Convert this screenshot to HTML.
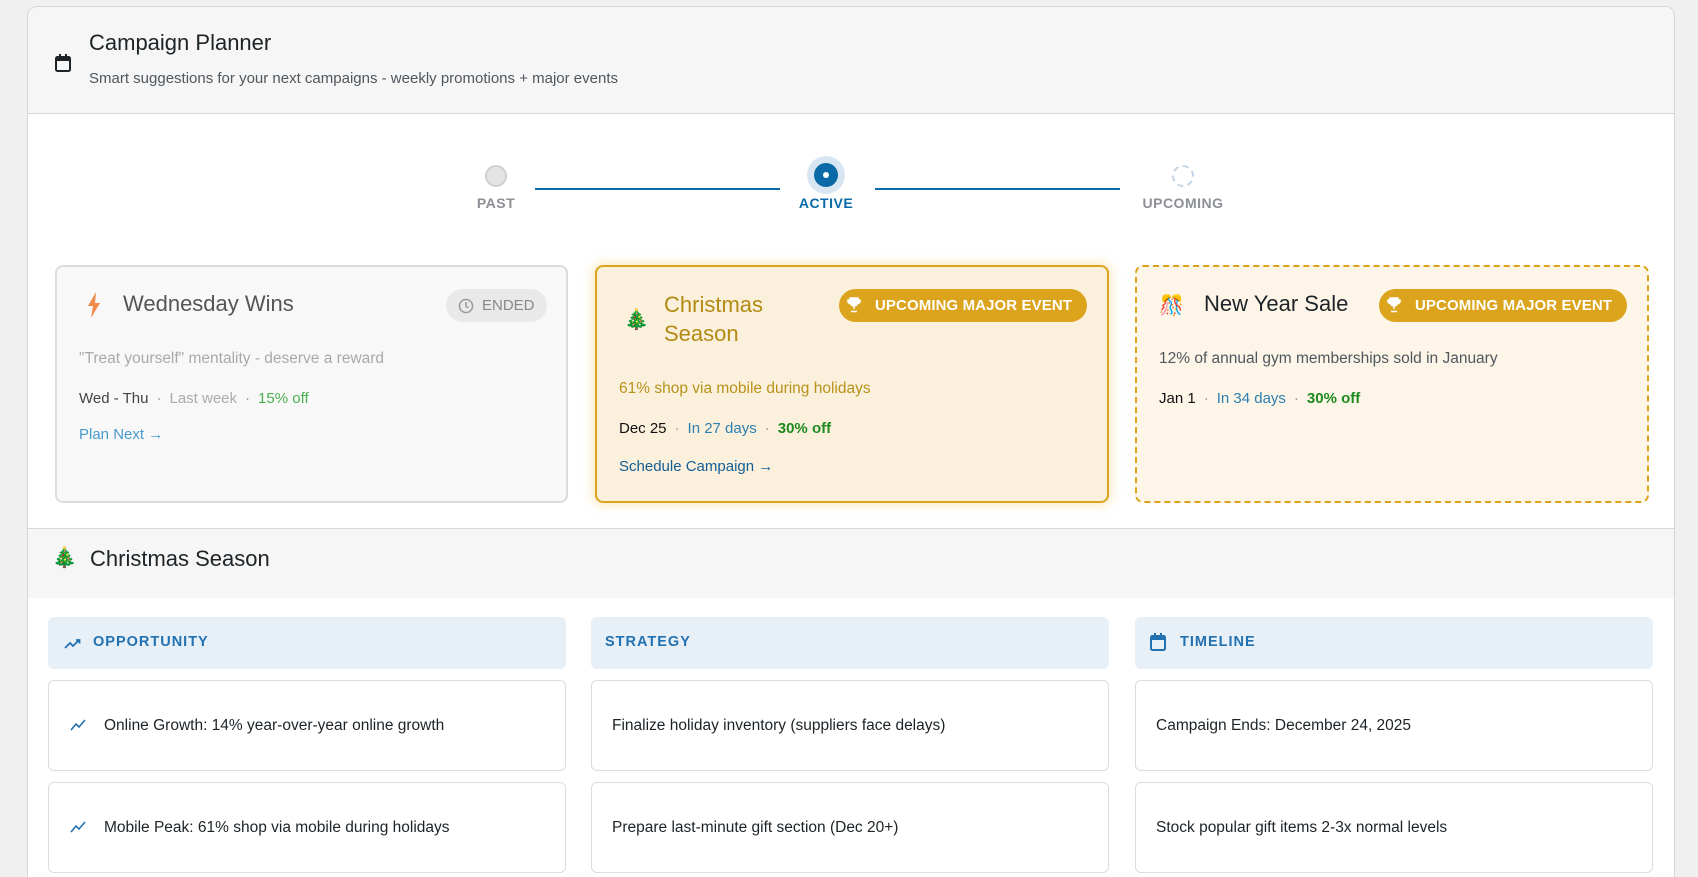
<!DOCTYPE html>
<html style="overflow:hidden;height:877px"><head><meta charset="utf-8"><style>
*{box-sizing:border-box;margin:0;padding:0}
body{width:1698px;height:877px;background:#f0f0f0;font-family:"Liberation Sans","Noto Sans CJK SC",sans-serif;overflow:hidden;position:relative;color:#1d2327}
.wrap{position:absolute;left:27px;top:6px;width:1648px;height:900px;background:#fff;border:1px solid #d5d5d5;border-radius:10px;overflow:hidden}
.hdr{position:absolute;left:0;top:0;width:100%;height:107px;background:#f5f6f5;border-bottom:1px solid #d5d8da}
.abs{position:absolute}
.card{position:absolute;height:238px;border-radius:8px}
.ttl{font-size:22px}
.badge{position:absolute;height:33px;border-radius:17px;background:#dba41c;color:#fff;font-weight:bold;font-size:15px;line-height:33px;padding-left:36px;letter-spacing:.1px}
.dot{color:#999;margin:0 8px}
.colh{position:absolute;top:610px;height:52px;width:518px;background:#e7eff7;border-radius:6px;color:#2271b1;font-weight:bold;font-size:14.5px;letter-spacing:1px;line-height:50px}
.row{position:absolute;width:518px;height:91px;border:1px solid #dcdcde;border-radius:6px;background:#fff;font-size:15.5px;line-height:89px;color:#1d2327}
</style></head><body>
<div class="wrap">
 <div class="hdr">
  <svg class="abs" style="left:26px;top:46px" width="18" height="20" viewBox="0 0 18 20"><rect x="2" y="4" width="14" height="14" rx="1.5" fill="none" stroke="#1d2327" stroke-width="2"/><rect x="2" y="4" width="14" height="4" fill="#1d2327"/><rect x="5" y="1" width="2" height="4" fill="#1d2327"/><rect x="11" y="1" width="2" height="4" fill="#1d2327"/></svg>
  <div class="abs" style="left:61px;top:23px;font-size:22px;font-weight:500">Campaign Planner</div>
  <div class="abs" style="left:61px;top:63px;font-size:15px;color:#50575e">Smart suggestions for your next campaigns - weekly promotions + major events</div>
 </div>
 <div class="abs" style="left:457px;top:158px;width:22px;height:22px;border-radius:50%;background:#e4e4e4;border:2px solid #d0d0d0"></div>
 <div class="abs" style="left:507px;top:181px;width:245px;height:2px;background:#0a6aa8"></div>
 <div class="abs" style="left:779px;top:149px;width:38px;height:38px;border-radius:50%;background:#d7e6f2"></div>
 <div class="abs" style="left:786px;top:156px;width:24px;height:24px;border-radius:50%;background:#0a6aa8"></div>
 <div class="abs" style="left:795px;top:165px;width:6px;height:6px;border-radius:50%;background:#fff"></div>
 <div class="abs" style="left:847px;top:181px;width:245px;height:2px;background:#0a6aa8"></div>
 <div class="abs" style="left:1144px;top:158px;width:22px;height:22px;border-radius:50%;border:2px dashed #c5d4e2"></div>
 <div class="abs" style="left:418px;top:188px;width:100px;text-align:center;font-size:14px;font-weight:bold;color:#8c8f94;letter-spacing:.5px">PAST</div>
 <div class="abs" style="left:748px;top:188px;width:100px;text-align:center;font-size:14px;font-weight:bold;color:#0a6aa8;letter-spacing:.5px">ACTIVE</div>
 <div class="abs" style="left:1085px;top:188px;width:140px;text-align:center;font-size:14px;font-weight:bold;color:#8c8f94;letter-spacing:.5px">UPCOMING</div>

 <div class="card" style="left:27px;top:258px;width:513px;background:#f8f8f8;border:2px solid #dcdcdc">
  <svg class="abs" style="left:30px;top:25px" width="14" height="26" viewBox="0 0 14 26"><path d="M9 0L1 14h5l-2 12 9-15H8z" fill="#f28a4a"/></svg>
  <div class="abs ttl" style="left:66px;top:24px;color:#555">Wednesday Wins</div>
  <div class="abs" style="left:389px;top:22px;width:101px;height:33px;border-radius:17px;background:#e9e9e9;color:#888;font-size:15px;line-height:33px;padding-left:36px">ENDED</div>
  <svg class="abs" style="left:401px;top:31px" width="16" height="16" viewBox="0 0 16 16"><circle cx="8" cy="8" r="6.5" fill="none" stroke="#999" stroke-width="1.5"/><path d="M8 4v4.5l2.5 1.5" fill="none" stroke="#999" stroke-width="1.5"/></svg>
  <div class="abs" style="left:22px;top:83px;font-size:15.5px;color:#a7aaad">"Treat yourself" mentality - deserve a reward</div>
  <div class="abs" style="left:22px;top:123px;font-size:15px;color:#444">Wed - Thu<span class="dot">·</span><span style="color:#aaa">Last week</span><span class="dot">·</span><span style="color:#4caf50">15% off</span></div>
  <div class="abs" style="left:22px;top:159px;font-size:15px;color:#4a9acb">Plan Next →</div>
 </div>

 <div class="card" style="left:567px;top:258px;width:514px;background:#faf0dc;border:2px solid #dba41c;box-shadow:0 0 10px 3px rgba(240,200,100,.35)">
  <div class="abs" style="left:27px;top:40px;font-size:20px">🎄</div>
  <div class="abs ttl" style="left:67px;top:23px;color:#b38a12;line-height:29px">Christmas<br>Season</div>
  <div class="badge" style="left:242px;top:22px;width:248px">UPCOMING MAJOR EVENT</div>
  <div class="abs" style="left:22px;top:113px;font-size:15.5px;color:#b8921a">61% shop via mobile during holidays</div>
  <div class="abs" style="left:22px;top:153px;font-size:15px;color:#111">Dec 25<span class="dot">·</span><span style="color:#2e7fb0">In 27 days</span><span class="dot">·</span><b style="color:#1f8a1f">30% off</b></div>
  <div class="abs" style="left:22px;top:191px;font-size:15px;color:#135e96;font-weight:500">Schedule Campaign →</div>
 </div>

 <div class="card" style="left:1107px;top:258px;width:514px;background:#fcf5e8;border:2px dashed #dba41c">
  <div class="abs" style="left:22px;top:26px;font-size:20px">🎊</div>
  <div class="abs ttl" style="left:67px;top:24px;color:#1d2327">New Year Sale</div>
  <div class="badge" style="left:242px;top:22px;width:248px">UPCOMING MAJOR EVENT</div>
  <div class="abs" style="left:22px;top:83px;font-size:15.5px;color:#50575e">12% of annual gym memberships sold in January</div>
  <div class="abs" style="left:22px;top:123px;font-size:15px;color:#111">Jan 1<span class="dot">·</span><span style="color:#2e7fb0">In 34 days</span><span class="dot">·</span><b style="color:#1f8a1f">30% off</b></div>
 </div>

 <div class="abs" style="left:0;top:521px;width:100%;height:70px;background:#f5f6f5;border-top:1px solid #d5d8da"></div>
 <div class="abs" style="left:24px;top:538px;font-size:20px">🎄</div>
 <div class="abs" style="left:62px;top:539px;font-size:22px;font-weight:500">Christmas Season</div>

 <div class="colh" style="left:20px;padding-left:45px">OPPORTUNITY</div>
 <svg class="abs" style="left:36px;top:629px" width="18" height="14" viewBox="0 0 18 14"><path d="M1 12l5-5 3 3 6-6M12 4h3.5v3.5" fill="none" stroke="#2271b1" stroke-width="1.8"/></svg>
 <div class="colh" style="left:563px;padding-left:14px">STRATEGY</div>
 <div class="colh" style="left:1107px;padding-left:45px">TIMELINE</div>
 <svg class="abs" style="left:1121px;top:625px" width="18" height="20" viewBox="0 0 18 20"><rect x="2" y="4" width="14" height="14" rx="1.5" fill="none" stroke="#2271b1" stroke-width="2"/><rect x="2" y="4" width="14" height="4" fill="#2271b1"/><rect x="5" y="1" width="2" height="4" fill="#2271b1"/><rect x="11" y="1" width="2" height="4" fill="#2271b1"/></svg>

 <div class="row" style="left:20px;top:673px;padding-left:55px">Online Growth: 14% year-over-year online growth</div>
 <div class="row" style="left:20px;top:775px;padding-left:55px">Mobile Peak: 61% shop via mobile during holidays</div>
 <svg class="abs" style="left:42px;top:712px" width="18" height="12" viewBox="0 0 18 12"><path d="M1 11l5-6 3 3 6-7" fill="none" stroke="#2271b1" stroke-width="1.6"/></svg>
 <svg class="abs" style="left:42px;top:814px" width="18" height="12" viewBox="0 0 18 12"><path d="M1 11l5-6 3 3 6-7" fill="none" stroke="#2271b1" stroke-width="1.6"/></svg>
 <div class="row" style="left:563px;top:673px;padding-left:20px">Finalize holiday inventory (suppliers face delays)</div>
 <div class="row" style="left:563px;top:775px;padding-left:20px">Prepare last-minute gift section (Dec 20+)</div>
 <div class="row" style="left:1107px;top:673px;padding-left:20px">Campaign Ends: December 24, 2025</div>
 <div class="row" style="left:1107px;top:775px;padding-left:20px">Stock popular gift items 2-3x normal levels</div>
</div>
<svg style="position:absolute;left:847px;top:297px" width="14" height="16" viewBox="0 0 14 16"><path d="M3 1h8v4a4 4 0 0 1-8 0zM3 3H1a2.5 2.5 0 0 0 2.5 3.5M11 3h2a2.5 2.5 0 0 1-2.5 3.5M7 9v3M4 14.5h6" fill="#fff" stroke="#fff" stroke-width="1.4"/></svg>
<svg style="position:absolute;left:1387px;top:297px" width="14" height="16" viewBox="0 0 14 16"><path d="M3 1h8v4a4 4 0 0 1-8 0zM3 3H1a2.5 2.5 0 0 0 2.5 3.5M11 3h2a2.5 2.5 0 0 1-2.5 3.5M7 9v3M4 14.5h6" fill="#fff" stroke="#fff" stroke-width="1.4"/></svg>
</body></html>
